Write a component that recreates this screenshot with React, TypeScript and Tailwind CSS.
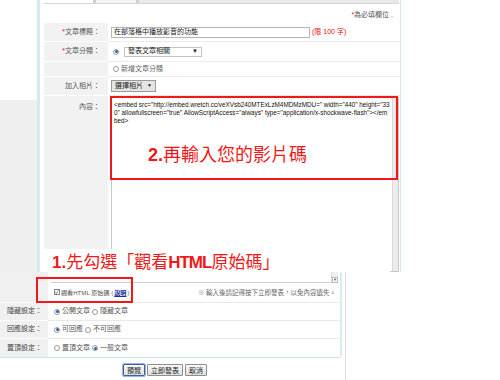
const cjk = { fontFamily: '"Liberation Sans", "Noto Sans CJK TC", sans-serif' };

function Radio({ on }: { on?: boolean }) {
  return (
    <span className="inline-flex h-[6px] w-[6px] items-center justify-center rounded-full border border-[#9a9a9a] bg-white">
      {on && <span className="h-[3px] w-[3px] rounded-full bg-[#2a63ad]" />}
    </span>
  );
}

function Btn({ children, focus }: { children: React.ReactNode; focus?: boolean }) {
  return (
    <div
      className={
        "flex h-[12px] items-center rounded-[1px] border bg-gradient-to-b from-[#fafafa] to-[#dedede] px-[3px] text-[7px] leading-[9px] text-[#222] " +
        (focus ? "border-[#3a5fa8] outline outline-1 outline-[#9bb7e0]" : "border-[#8e8e8e]")
      }
    >
      {children}
    </div>
  );
}

export default function App() {
  return (
    <div className="relative h-[380px] w-[500px] overflow-hidden bg-white" style={cjk}>
      {/* upper form */}
      <div className="flex h-[272px]">
        <div className="flex w-[37px] flex-col">
          <div className="h-[100px] bg-white" />
          <div className="flex-1 bg-[#efefef]" />
        </div>
        <div className="w-[3px] bg-[#d3ebf0]" />
        <div className="flex w-[361px] flex-col border-r border-[#cfe7ed] pl-[4px] pr-[1px]">
          <div className="flex h-[4px] border-b border-[#d6d6d6]">
            <div className="w-[49px] bg-white" />
            <div className="w-[3px] bg-[#cfcfcf]" />
            <div className="w-[40px] bg-[#f3f3f3]" />
            <div className="w-[3px] bg-[#cfcfcf]" />
            <div className="flex-1 bg-[#e9e9e9]" />
          </div>
          <div className="flex h-[19px] items-center justify-end pr-[6px] pt-[3px] text-[7px] text-[#555]">
            <span className="text-[#e01010]">*</span>為必填欄位 .
          </div>

          <div className="grid flex-1 grid-cols-[64px_1fr] grid-rows-[19px_20px_15px_19px_1fr]">
            <div className="flex items-center justify-end border-b border-white bg-[#f2f2f2] pr-[8px] text-[7px] text-[#555]">
              <span className="text-[#e01010]">*</span>文章標題：
            </div>
            <div className="flex items-center border-b border-[#ececec] pl-[3px]">
              <div className="flex h-[11px] w-[199px] items-center border border-[#b5b5b5] pl-[2px] text-[7px] text-[#222]">
                在部落格中播放影音的功能
              </div>
              <span className="pl-[2px] text-[7px] text-[#e01010]">(限 100 字)</span>
            </div>

            <div className="flex items-center justify-end border-b border-white bg-[#f2f2f2] pr-[8px] text-[7px] text-[#555]">
              <span className="text-[#e01010]">*</span>文章分類：
            </div>
            <div className="flex items-center gap-[5px] border-b border-[#ececec] pl-[5px]">
              <Radio on />
              <div className="flex h-[10px] w-[78px] items-center justify-between border border-[#c4c4c4] px-[3px] text-[7px] text-[#222]">
                發表文章相關
                <span className="text-[6px]">▼</span>
              </div>
            </div>

            <div className="border-b border-white bg-[#f2f2f2]" />
            <div className="flex items-center gap-[2px] border-b border-[#ececec] pl-[5px] text-[7px] text-[#666]">
              <Radio />
              新增文章分類
            </div>

            <div className="flex items-center justify-end border-b border-white bg-[#f2f2f2] pr-[8px] text-[7px] text-[#555]">
              加入相片：
            </div>
            <div className="flex items-center border-b border-[#ececec] pl-[3px]">
              <div className="flex h-[12px] w-[45px] items-center justify-center gap-[4px] border border-[#9a9a9a] bg-[#e4e4e4] text-[7px] text-[#222]">
                選擇相片<span className="text-[5px]">▼</span>
              </div>
            </div>

            <div className="bg-[#f2f2f2] pr-[8px] pt-[6px] text-right text-[7px] text-[#555]">內容：</div>
            <div className="flex pl-[3px] pr-[1px] pt-[1px]">
              <div className="flex min-w-0 flex-1 border border-[#c9c9c9]">
                <div
                  className="min-w-0 flex-1 overflow-hidden whitespace-nowrap px-[2px] pt-[3px] text-[6.35px] leading-[8px] text-[#111]"
                  style={{ fontFamily: '"Liberation Sans", Arial, sans-serif' }}
                >
                  &lt;embed src="http://embed.wretch.cc/veXVsb240MTExLzM4MDMzMDU=" width="440" height="33
                  <br />
                  0" allowfullscreen="true" AllowScriptAccess="always" type="application/x-shockwave-flash"&gt;&lt;/em
                  <br />
                  bed&gt;
                </div>
                <div className="w-[6px] shrink-0 border-l border-[#dadada] bg-[#ececec]" />
              </div>
            </div>
          </div>
        </div>
      </div>

      {/* lower form */}
      <div className="flex h-[108px]">
        <div className="flex w-[342px] flex-col">
          <div className="grid grid-cols-[48px_292px] grid-rows-[31px_18px_18px_18px] border-r-2 border-[#d6edf2]">
            <div className="border-b border-white bg-[#f0f0f0]" />
            <div className="flex flex-col border-b border-[#e8e8e8]">
              <div className="ml-[3px] mr-[2px] flex h-[11px] justify-end border-b border-[#cfcfcf]">
                <div className="flex w-[7px] items-start justify-center border-l border-[#dadada] bg-[#efefef]">
                  <span className="mt-[5px] flex h-[6px] w-[6px] items-center justify-center border border-[#bbb] bg-white text-[4px] text-[#555]">
                    ▼
                  </span>
                </div>
              </div>
              <div className="flex flex-1 items-center justify-between pl-[6px] pr-[4px] text-[6.1px] text-[#555]">
                <div className="flex items-center gap-[1px]">
                  <span className="flex h-[6px] w-[6px] items-center justify-center border border-[#888] bg-white text-[6px] leading-[6px] text-[#1f4f8f]">
                    ✓
                  </span>
                  觀看HTML 原始碼 (
                  <span className="font-bold text-[#1a2fa0] underline">說明</span>)
                </div>
                <div className="text-[6.5px] text-[#666]" style={{ fontFamily: '"Noto Sans CJK TC", sans-serif' }}>
                  <span className="text-[#999]">※</span> 輸入後請記得按下立即發表，以免內容遺失。
                </div>
              </div>
            </div>

            <div className="flex items-center justify-end border-b border-white bg-[#f0f0f0] pr-[6px] text-[7px] text-[#444]">
              隱藏設定：
            </div>
            <div className="flex items-center gap-[2px] border-b border-[#e8e8e8] pl-[6px] text-[7px] text-[#555]">
              <Radio on />公開文章 <Radio />隱藏文章
            </div>

            <div className="flex items-center justify-end border-b border-white bg-[#f0f0f0] pr-[6px] text-[7px] text-[#444]">
              回應設定：
            </div>
            <div className="flex items-center gap-[2px] border-b border-[#e8e8e8] pl-[6px] text-[7px] text-[#555]">
              <Radio on />可回應 <Radio />不可回應
            </div>

            <div className="flex items-center justify-end bg-[#f0f0f0] pr-[6px] text-[7px] text-[#444]">置頂設定：</div>
            <div className="flex items-center gap-[2px] pl-[6px] text-[7px] text-[#555]">
              <Radio />置頂文章 <Radio on />一般文章
            </div>
          </div>
          <div className="h-[1px] w-[340px] bg-[#c9e4ea]" />
          <div className="flex gap-[2px] pl-[123px] pt-[6px]">
            <Btn focus>預覽</Btn>
            <Btn>立即發表</Btn>
            <Btn>取消</Btn>
          </div>
        </div>
        <div className="w-[3px]" />
        <div className="w-[1px] bg-[#dcdcdc]" />
        <div className="flex-1" />
      </div>

      {/* annotations */}
      <div className="absolute left-[110px] top-[96px] h-[84px] w-[288px] border-2 border-[#f01818]" />
      <div
        className="absolute left-[148px] top-[141px] text-[18px] leading-[24px] text-[#f01818]"
        style={{ fontFamily: '"Noto Sans CJK TC", sans-serif' }}
      >
        <span className="font-bold" style={{ fontFamily: '"Liberation Sans", sans-serif' }}>2.</span>再輸入您的影片碼
      </div>

      <div
        className="absolute left-[44px] top-[249px] h-[23px] w-[346px] bg-white pl-[8px] text-[17px] leading-[23px] text-[#f01818]"
        style={{ fontFamily: '"Noto Sans CJK TC", sans-serif' }}
      >
        <span className="font-bold" style={{ fontFamily: '"Liberation Sans", sans-serif' }}>1.</span>先勾選「觀看
        <span className="font-bold tracking-[-1px]" style={{ fontFamily: '"Liberation Sans", sans-serif' }}>HTML</span>
        原始碼」
      </div>
      <div className="absolute left-[36px] top-[277px] h-[26px] w-[97px] border-2 border-[#f01818]" />
    </div>
  );
}
